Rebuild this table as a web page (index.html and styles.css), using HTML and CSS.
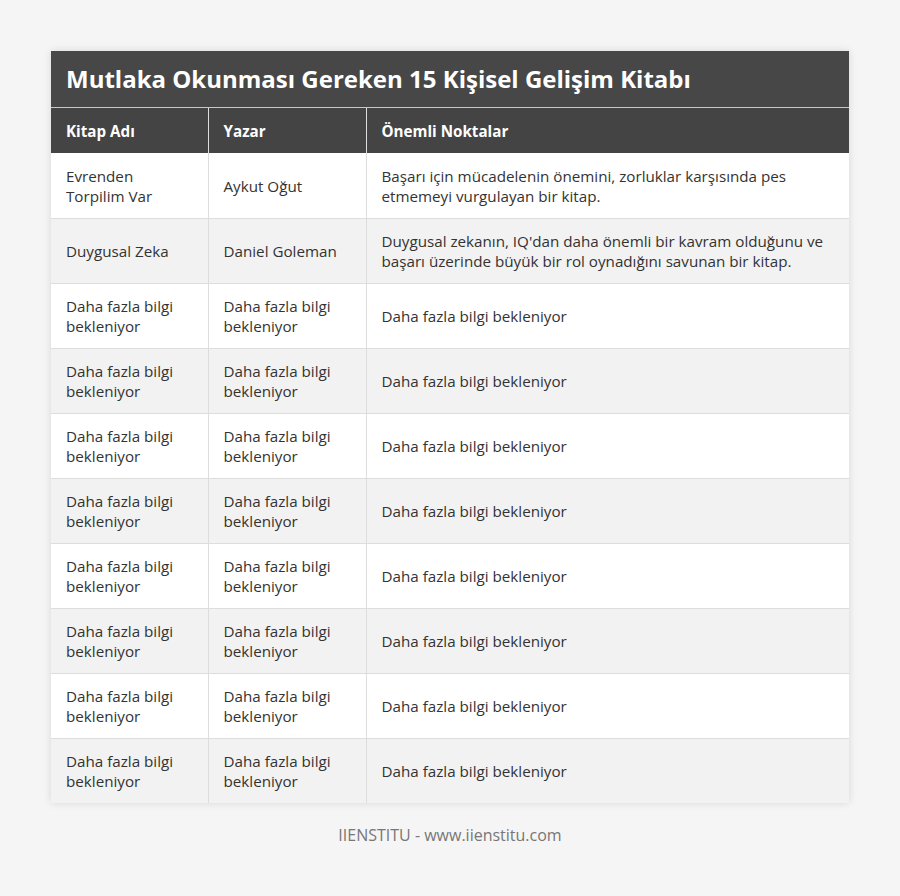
FILE: index.html
```html
<!DOCTYPE html>
<html lang="tr">
<head>
<meta charset="utf-8">
<link rel="stylesheet" href="styles.css">
</head>
<body>
<div class="page">
  <div class="card">
    <div class="title">Mutlaka Okunması Gereken 15 Kişisel Gelişim Kitabı</div>
    <table class="tbl">
      <colgroup><col class="c1"><col class="c2"><col class="c3"></colgroup>
      <thead>
        <tr><th>Kitap Adı</th><th>Yazar</th><th>Önemli Noktalar</th></tr>
      </thead>
      <tbody>
        <tr><td>Evrenden Torpilim Var</td><td>Aykut Oğut</td><td>Başarı için mücadelenin önemini, zorluklar karşısında pes etmemeyi vurgulayan bir kitap.</td></tr>
        <tr><td>Duygusal Zeka</td><td>Daniel Goleman</td><td>Duygusal zekanın, IQ'dan daha önemli bir kavram olduğunu ve başarı üzerinde büyük bir rol oynadığını savunan bir kitap.</td></tr>
        <tr><td>Daha fazla bilgi bekleniyor</td><td>Daha fazla bilgi bekleniyor</td><td>Daha fazla bilgi bekleniyor</td></tr>
        <tr><td>Daha fazla bilgi bekleniyor</td><td>Daha fazla bilgi bekleniyor</td><td>Daha fazla bilgi bekleniyor</td></tr>
        <tr><td>Daha fazla bilgi bekleniyor</td><td>Daha fazla bilgi bekleniyor</td><td>Daha fazla bilgi bekleniyor</td></tr>
        <tr><td>Daha fazla bilgi bekleniyor</td><td>Daha fazla bilgi bekleniyor</td><td>Daha fazla bilgi bekleniyor</td></tr>
        <tr><td>Daha fazla bilgi bekleniyor</td><td>Daha fazla bilgi bekleniyor</td><td>Daha fazla bilgi bekleniyor</td></tr>
        <tr><td>Daha fazla bilgi bekleniyor</td><td>Daha fazla bilgi bekleniyor</td><td>Daha fazla bilgi bekleniyor</td></tr>
        <tr><td>Daha fazla bilgi bekleniyor</td><td>Daha fazla bilgi bekleniyor</td><td>Daha fazla bilgi bekleniyor</td></tr>
        <tr><td>Daha fazla bilgi bekleniyor</td><td>Daha fazla bilgi bekleniyor</td><td>Daha fazla bilgi bekleniyor</td></tr>
      </tbody>
    </table>
  </div>
  <div class="footer">IIENSTITU - www.iienstitu.com</div>
</div>
</body>
</html>
```

FILE: styles.css
```css
html, body {
  margin: 0;
  padding: 0;
  background: #f5f5f5;
  font-family: "Open Sans", "Noto Sans", sans-serif;
  color: #333;
}
.page {
  padding: 51px 51px 0 51px;
}
.card {
  background: #fff;
  box-shadow: 0 0 8px rgba(0,0,0,0.12);
}
.title {
  background: #474747;
  color: #fff;
  font-size: 24px;
  font-weight: 700;
  height: 57px;
  line-height: 56px;
  padding: 0 15px;
  border-bottom: 1px solid #c8c8c8;
  box-sizing: border-box;
}
.tbl {
  width: 100%;
  border-collapse: collapse;
  table-layout: fixed;
  font-size: 15.2px;
  line-height: 20px;
}
.c1 { width: 157px; }
.c2 { width: 158px; }
.tbl th {
  background: #444;
  color: #fff;
  font-weight: 700;
  text-align: left;
  height: 45px;
  padding: 0 15px;
  border-left: 1px solid #ddd;
  box-sizing: border-box;
}
.tbl th:first-child, .tbl td:first-child { border-left: none; }
.tbl td {
  height: 64px;
  padding: 0 15px;
  border-left: 1px solid #ddd;
  border-top: 1px solid #ddd;
  vertical-align: middle;
  color: #333;
}
.tbl tbody tr:first-child td { border-top: none; height: 65px; }
.tbl tbody tr:nth-child(even) td { background: #f2f2f2; }
.footer {
  text-align: center;
  color: #777;
  font-size: 16px;
  padding-top: 21px;
}
```
